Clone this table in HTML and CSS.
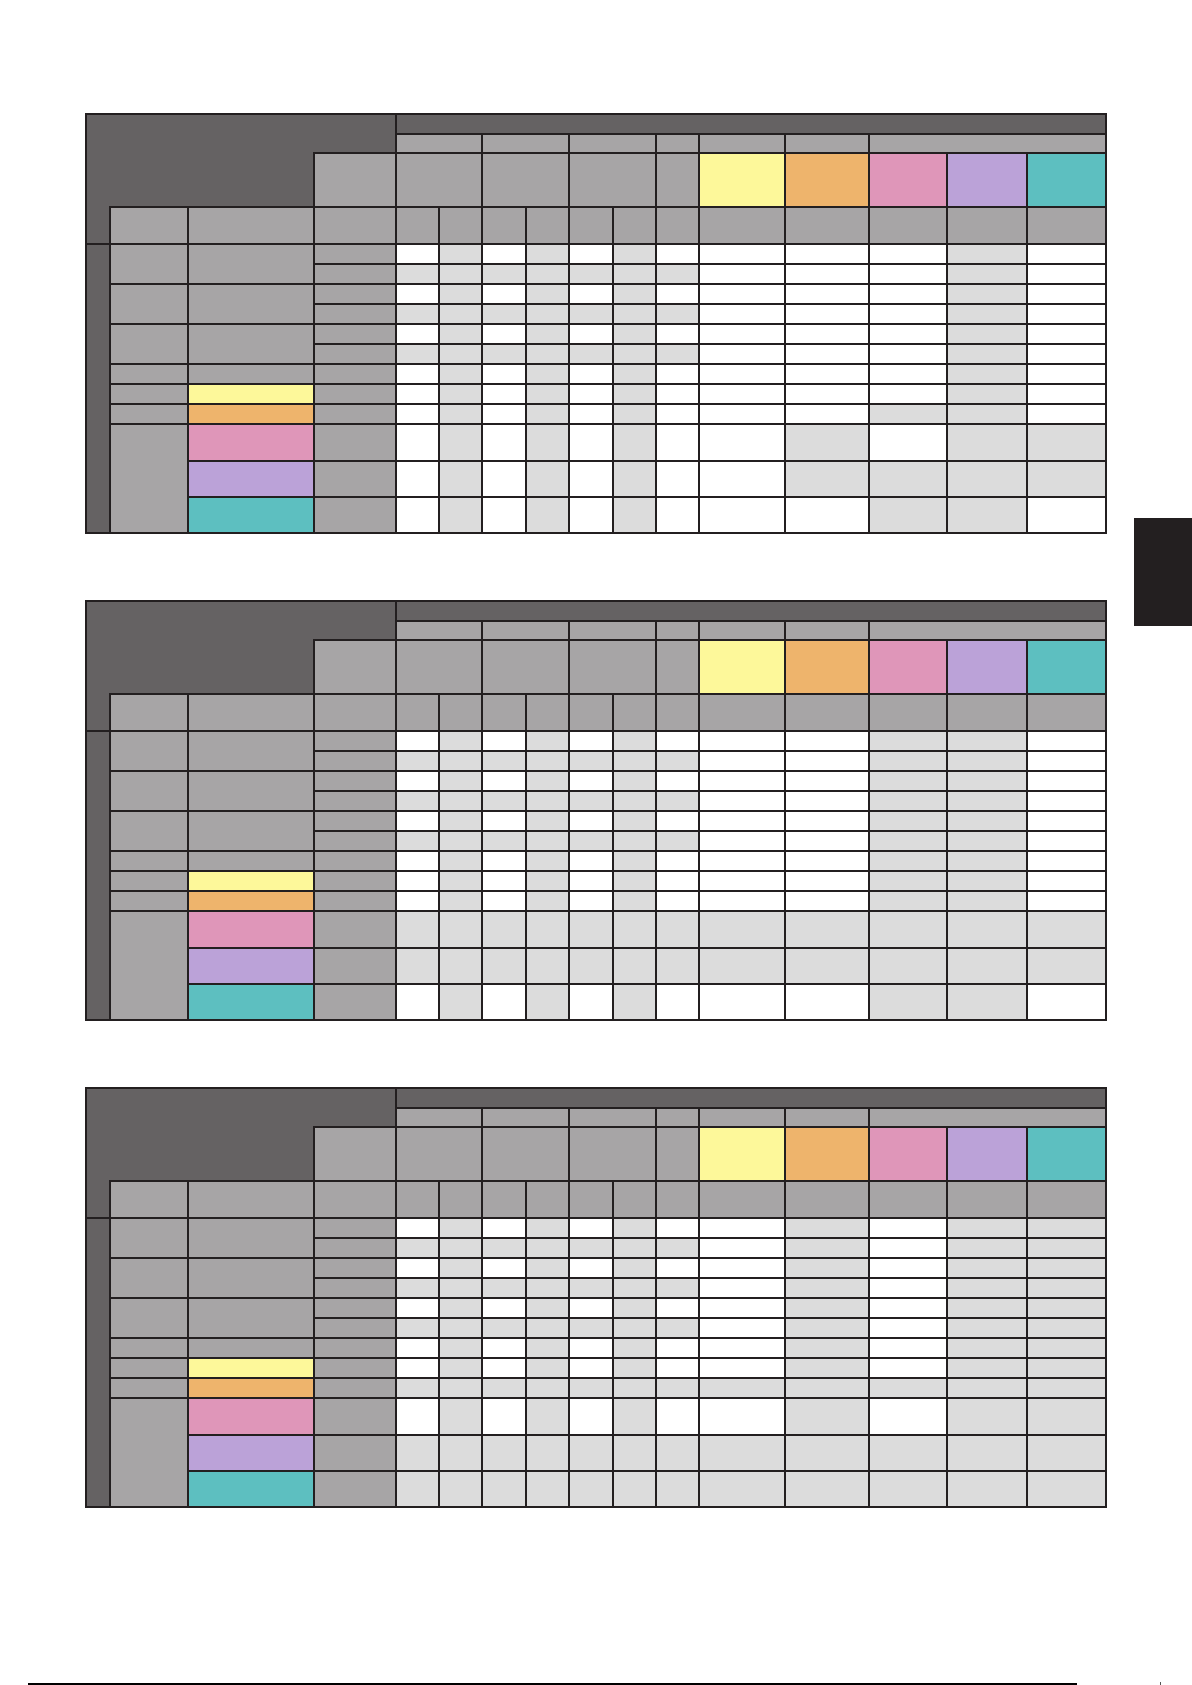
FILE: index.html
```html
<!DOCTYPE html>
<html>
<head>
<meta charset="utf-8">
<link rel="stylesheet" href="styles.css">
</head>
<body>
<div class="page">
  <div class="tables">

    <div class="grid">
      <i class="dk dk1"></i><i class="dk top"></i>
      <i class="g h2 s1"></i><i class="g h2 s2"></i><i class="g h2 s3"></i><i class="g h2 s4"></i><i class="g h2 s5"></i><i class="g h2 s6"></i><i class="g h2 s7"></i>
      <i class="dk dk2"></i><i class="g h3 c4"></i><i class="g h3 s1"></i><i class="g h3 s2"></i><i class="g h3 s3"></i><i class="g h3 s4"></i><i class="y h3 s5"></i><i class="o h3 s6"></i><i class="p h3 c14"></i><i class="v h3 c15"></i><i class="t h3 c16"></i>
      <i class="dk dk3"></i>
      <i class="dk body"></i>
      <i class="g a1"></i><i class="g a2"></i><i class="g a3"></i><i class="g a4"></i><i class="g a5"></i><i class="g a6"></i><i class="g a7"></i>
      <i class="g b1"></i><i class="g b2"></i><i class="g b3"></i><i class="g b4"></i><i class="y b5"></i><i class="o b6"></i><i class="p b7"></i><i class="v b8"></i><i class="t b9"></i>
      <i class="g"></i><i class="g"></i><i class="g"></i><i class="g"></i><i class="g"></i><i class="g"></i><i class="g"></i><i class="g"></i><i class="g"></i><i class="g"></i><i class="g"></i><i class="g"></i><i class="g"></i><i class="g"></i><i class="g"></i>
      <i class="g"></i><i class="w"></i><i class="l"></i><i class="w"></i><i class="l"></i><i class="w"></i><i class="l"></i><i class="w"></i><i class="w"></i><i class="w"></i><i class="w"></i><i class="l"></i><i class="w"></i>
      <i class="g"></i><i class="l"></i><i class="l"></i><i class="l"></i><i class="l"></i><i class="l"></i><i class="l"></i><i class="l"></i><i class="w"></i><i class="w"></i><i class="w"></i><i class="l"></i><i class="w"></i>
      <i class="g"></i><i class="w"></i><i class="l"></i><i class="w"></i><i class="l"></i><i class="w"></i><i class="l"></i><i class="w"></i><i class="w"></i><i class="w"></i><i class="w"></i><i class="l"></i><i class="w"></i>
      <i class="g"></i><i class="l"></i><i class="l"></i><i class="l"></i><i class="l"></i><i class="l"></i><i class="l"></i><i class="l"></i><i class="w"></i><i class="w"></i><i class="w"></i><i class="l"></i><i class="w"></i>
      <i class="g"></i><i class="w"></i><i class="l"></i><i class="w"></i><i class="l"></i><i class="w"></i><i class="l"></i><i class="w"></i><i class="w"></i><i class="w"></i><i class="w"></i><i class="l"></i><i class="w"></i>
      <i class="g"></i><i class="l"></i><i class="l"></i><i class="l"></i><i class="l"></i><i class="l"></i><i class="l"></i><i class="l"></i><i class="w"></i><i class="w"></i><i class="w"></i><i class="l"></i><i class="w"></i>
      <i class="g"></i><i class="w"></i><i class="l"></i><i class="w"></i><i class="l"></i><i class="w"></i><i class="l"></i><i class="w"></i><i class="w"></i><i class="w"></i><i class="w"></i><i class="l"></i><i class="w"></i>
      <i class="g"></i><i class="w"></i><i class="l"></i><i class="w"></i><i class="l"></i><i class="w"></i><i class="l"></i><i class="w"></i><i class="w"></i><i class="w"></i><i class="w"></i><i class="l"></i><i class="w"></i>
      <i class="g"></i><i class="w"></i><i class="l"></i><i class="w"></i><i class="l"></i><i class="w"></i><i class="l"></i><i class="w"></i><i class="w"></i><i class="w"></i><i class="l"></i><i class="l"></i><i class="w"></i>
      <i class="g"></i><i class="w"></i><i class="l"></i><i class="w"></i><i class="l"></i><i class="w"></i><i class="l"></i><i class="w"></i><i class="w"></i><i class="l"></i><i class="w"></i><i class="l"></i><i class="l"></i>
      <i class="g"></i><i class="w"></i><i class="l"></i><i class="w"></i><i class="l"></i><i class="w"></i><i class="l"></i><i class="w"></i><i class="w"></i><i class="l"></i><i class="l"></i><i class="l"></i><i class="l"></i>
      <i class="g"></i><i class="w"></i><i class="l"></i><i class="w"></i><i class="l"></i><i class="w"></i><i class="l"></i><i class="w"></i><i class="w"></i><i class="w"></i><i class="l"></i><i class="l"></i><i class="w"></i>
    </div>

    <div class="grid">
      <i class="dk dk1"></i><i class="dk top"></i>
      <i class="g h2 s1"></i><i class="g h2 s2"></i><i class="g h2 s3"></i><i class="g h2 s4"></i><i class="g h2 s5"></i><i class="g h2 s6"></i><i class="g h2 s7"></i>
      <i class="dk dk2"></i><i class="g h3 c4"></i><i class="g h3 s1"></i><i class="g h3 s2"></i><i class="g h3 s3"></i><i class="g h3 s4"></i><i class="y h3 s5"></i><i class="o h3 s6"></i><i class="p h3 c14"></i><i class="v h3 c15"></i><i class="t h3 c16"></i>
      <i class="dk dk3"></i>
      <i class="dk body"></i>
      <i class="g a1"></i><i class="g a2"></i><i class="g a3"></i><i class="g a4"></i><i class="g a5"></i><i class="g a6"></i><i class="g a7"></i>
      <i class="g b1"></i><i class="g b2"></i><i class="g b3"></i><i class="g b4"></i><i class="y b5"></i><i class="o b6"></i><i class="p b7"></i><i class="v b8"></i><i class="t b9"></i>
      <i class="g"></i><i class="g"></i><i class="g"></i><i class="g"></i><i class="g"></i><i class="g"></i><i class="g"></i><i class="g"></i><i class="g"></i><i class="g"></i><i class="g"></i><i class="g"></i><i class="g"></i><i class="g"></i><i class="g"></i>
      <i class="g"></i><i class="w"></i><i class="l"></i><i class="w"></i><i class="l"></i><i class="w"></i><i class="l"></i><i class="w"></i><i class="w"></i><i class="w"></i><i class="l"></i><i class="l"></i><i class="w"></i>
      <i class="g"></i><i class="l"></i><i class="l"></i><i class="l"></i><i class="l"></i><i class="l"></i><i class="l"></i><i class="l"></i><i class="w"></i><i class="w"></i><i class="l"></i><i class="l"></i><i class="w"></i>
      <i class="g"></i><i class="w"></i><i class="l"></i><i class="w"></i><i class="l"></i><i class="w"></i><i class="l"></i><i class="w"></i><i class="w"></i><i class="w"></i><i class="l"></i><i class="l"></i><i class="w"></i>
      <i class="g"></i><i class="l"></i><i class="l"></i><i class="l"></i><i class="l"></i><i class="l"></i><i class="l"></i><i class="l"></i><i class="w"></i><i class="w"></i><i class="l"></i><i class="l"></i><i class="w"></i>
      <i class="g"></i><i class="w"></i><i class="l"></i><i class="w"></i><i class="l"></i><i class="w"></i><i class="l"></i><i class="w"></i><i class="w"></i><i class="w"></i><i class="l"></i><i class="l"></i><i class="w"></i>
      <i class="g"></i><i class="l"></i><i class="l"></i><i class="l"></i><i class="l"></i><i class="l"></i><i class="l"></i><i class="l"></i><i class="w"></i><i class="w"></i><i class="l"></i><i class="l"></i><i class="w"></i>
      <i class="g"></i><i class="w"></i><i class="l"></i><i class="w"></i><i class="l"></i><i class="w"></i><i class="l"></i><i class="w"></i><i class="w"></i><i class="w"></i><i class="l"></i><i class="l"></i><i class="w"></i>
      <i class="g"></i><i class="w"></i><i class="l"></i><i class="w"></i><i class="l"></i><i class="w"></i><i class="l"></i><i class="w"></i><i class="w"></i><i class="w"></i><i class="l"></i><i class="l"></i><i class="w"></i>
      <i class="g"></i><i class="w"></i><i class="l"></i><i class="w"></i><i class="l"></i><i class="w"></i><i class="l"></i><i class="w"></i><i class="w"></i><i class="w"></i><i class="l"></i><i class="l"></i><i class="w"></i>
      <i class="g"></i><i class="l"></i><i class="l"></i><i class="l"></i><i class="l"></i><i class="l"></i><i class="l"></i><i class="l"></i><i class="l"></i><i class="l"></i><i class="l"></i><i class="l"></i><i class="l"></i>
      <i class="g"></i><i class="l"></i><i class="l"></i><i class="l"></i><i class="l"></i><i class="l"></i><i class="l"></i><i class="l"></i><i class="l"></i><i class="l"></i><i class="l"></i><i class="l"></i><i class="l"></i>
      <i class="g"></i><i class="w"></i><i class="l"></i><i class="w"></i><i class="l"></i><i class="w"></i><i class="l"></i><i class="w"></i><i class="w"></i><i class="w"></i><i class="l"></i><i class="l"></i><i class="w"></i>
    </div>

    <div class="grid">
      <i class="dk dk1"></i><i class="dk top"></i>
      <i class="g h2 s1"></i><i class="g h2 s2"></i><i class="g h2 s3"></i><i class="g h2 s4"></i><i class="g h2 s5"></i><i class="g h2 s6"></i><i class="g h2 s7"></i>
      <i class="dk dk2"></i><i class="g h3 c4"></i><i class="g h3 s1"></i><i class="g h3 s2"></i><i class="g h3 s3"></i><i class="g h3 s4"></i><i class="y h3 s5"></i><i class="o h3 s6"></i><i class="p h3 c14"></i><i class="v h3 c15"></i><i class="t h3 c16"></i>
      <i class="dk dk3"></i>
      <i class="dk body"></i>
      <i class="g a1"></i><i class="g a2"></i><i class="g a3"></i><i class="g a4"></i><i class="g a5"></i><i class="g a6"></i><i class="g a7"></i>
      <i class="g b1"></i><i class="g b2"></i><i class="g b3"></i><i class="g b4"></i><i class="y b5"></i><i class="o b6"></i><i class="p b7"></i><i class="v b8"></i><i class="t b9"></i>
      <i class="g"></i><i class="g"></i><i class="g"></i><i class="g"></i><i class="g"></i><i class="g"></i><i class="g"></i><i class="g"></i><i class="g"></i><i class="g"></i><i class="g"></i><i class="g"></i><i class="g"></i><i class="g"></i><i class="g"></i>
      <i class="g"></i><i class="w"></i><i class="l"></i><i class="w"></i><i class="l"></i><i class="w"></i><i class="l"></i><i class="w"></i><i class="w"></i><i class="l"></i><i class="w"></i><i class="l"></i><i class="l"></i>
      <i class="g"></i><i class="l"></i><i class="l"></i><i class="l"></i><i class="l"></i><i class="l"></i><i class="l"></i><i class="l"></i><i class="w"></i><i class="l"></i><i class="w"></i><i class="l"></i><i class="l"></i>
      <i class="g"></i><i class="w"></i><i class="l"></i><i class="w"></i><i class="l"></i><i class="w"></i><i class="l"></i><i class="w"></i><i class="w"></i><i class="l"></i><i class="w"></i><i class="l"></i><i class="l"></i>
      <i class="g"></i><i class="l"></i><i class="l"></i><i class="l"></i><i class="l"></i><i class="l"></i><i class="l"></i><i class="l"></i><i class="w"></i><i class="l"></i><i class="w"></i><i class="l"></i><i class="l"></i>
      <i class="g"></i><i class="w"></i><i class="l"></i><i class="w"></i><i class="l"></i><i class="w"></i><i class="l"></i><i class="w"></i><i class="w"></i><i class="l"></i><i class="w"></i><i class="l"></i><i class="l"></i>
      <i class="g"></i><i class="l"></i><i class="l"></i><i class="l"></i><i class="l"></i><i class="l"></i><i class="l"></i><i class="l"></i><i class="w"></i><i class="l"></i><i class="w"></i><i class="l"></i><i class="l"></i>
      <i class="g"></i><i class="w"></i><i class="l"></i><i class="w"></i><i class="l"></i><i class="w"></i><i class="l"></i><i class="w"></i><i class="w"></i><i class="l"></i><i class="w"></i><i class="l"></i><i class="l"></i>
      <i class="g"></i><i class="w"></i><i class="l"></i><i class="w"></i><i class="l"></i><i class="w"></i><i class="l"></i><i class="w"></i><i class="w"></i><i class="l"></i><i class="w"></i><i class="l"></i><i class="l"></i>
      <i class="g"></i><i class="l"></i><i class="l"></i><i class="l"></i><i class="l"></i><i class="l"></i><i class="l"></i><i class="l"></i><i class="l"></i><i class="l"></i><i class="l"></i><i class="l"></i><i class="l"></i>
      <i class="g"></i><i class="w"></i><i class="l"></i><i class="w"></i><i class="l"></i><i class="w"></i><i class="l"></i><i class="w"></i><i class="w"></i><i class="l"></i><i class="w"></i><i class="l"></i><i class="l"></i>
      <i class="g"></i><i class="l"></i><i class="l"></i><i class="l"></i><i class="l"></i><i class="l"></i><i class="l"></i><i class="l"></i><i class="l"></i><i class="l"></i><i class="l"></i><i class="l"></i><i class="l"></i>
      <i class="g"></i><i class="l"></i><i class="l"></i><i class="l"></i><i class="l"></i><i class="l"></i><i class="l"></i><i class="l"></i><i class="l"></i><i class="l"></i><i class="l"></i><i class="l"></i><i class="l"></i>
    </div>

  </div>
  <div class="tab"></div>
</div>
<div class="footer"><span class="rule"></span><span class="mark"></span></div>
</body>
</html>
```

FILE: styles.css
```css
html, body {
  margin: 0;
  padding: 0;
  background: #ffffff;
}
body {
  width: 1192px;
  height: 1685px;
  overflow: hidden;
  font-family: "Liberation Sans", Arial, sans-serif;
}
.page {
  display: flex;
  align-items: flex-start;
  padding: 113px 0 0 85px;
}
.tables {
  display: flex;
  flex-direction: column;
  gap: 66px;
}
.tab {
  margin-left: auto;
  margin-top: 405px;
  width: 58px;
  height: 108px;
  background: #231f20;
}
.grid {
  display: grid;
  grid-template-columns: 22px 76px 124px 80px 41px 41px 42px 41px 42px 41px 41px 84px 82px 76px 78px 77px;
  grid-template-rows: 18px 17px 52px 35px repeat(9, 18px) 35px 34px 34px;
  gap: 2px;
  padding: 2px;
  background: #231f20;
  width: max-content;
}
.grid i { display: block; }
.dk { background: #656263; }
.g { background: #a7a5a6; }
.w { background: #ffffff; }
.l { background: #dcdcdc; }
.y { background: #fdf89a; }
.o { background: #eeb46c; }
.p { background: #df96b9; }
.v { background: #bba2d8; }
.t { background: #5dbfc0; }

.dk1 { grid-column: 1 / 5; grid-row: 1 / 3; }
.top { grid-column: 5 / 17; grid-row: 1; }
.dk2 { grid-column: 1 / 4; grid-row: 3; margin-top: -2px; }
.dk3 { grid-column: 1; grid-row: 4; margin-top: -2px; }
.body { grid-column: 1; grid-row: 5 / 17; }

.h2 { grid-row: 2; }
.h3 { grid-row: 3; }
.s1 { grid-column: 5 / 7; }
.s2 { grid-column: 7 / 9; }
.s3 { grid-column: 9 / 11; }
.s4 { grid-column: 11; }
.s5 { grid-column: 12; }
.s6 { grid-column: 13; }
.s7 { grid-column: 14 / 17; }
.c4 { grid-column: 4; }
.c14 { grid-column: 14; }
.c15 { grid-column: 15; }
.c16 { grid-column: 16; }

.a1 { grid-column: 2; grid-row: 5 / 7; }
.a2 { grid-column: 2; grid-row: 7 / 9; }
.a3 { grid-column: 2; grid-row: 9 / 11; }
.a4 { grid-column: 2; grid-row: 11; }
.a5 { grid-column: 2; grid-row: 12; }
.a6 { grid-column: 2; grid-row: 13; }
.a7 { grid-column: 2; grid-row: 14 / 17; }

.b1 { grid-column: 3; grid-row: 5 / 7; }
.b2 { grid-column: 3; grid-row: 7 / 9; }
.b3 { grid-column: 3; grid-row: 9 / 11; }
.b4 { grid-column: 3; grid-row: 11; }
.b5 { grid-column: 3; grid-row: 12; }
.b6 { grid-column: 3; grid-row: 13; }
.b7 { grid-column: 3; grid-row: 14; }
.b8 { grid-column: 3; grid-row: 15; }
.b9 { grid-column: 3; grid-row: 16; }

.footer {
  display: flex;
  align-items: flex-end;
  margin-top: 173px;
  padding-left: 28px;
  height: 4px;
}
.footer .rule {
  display: block;
  width: 1049px;
  height: 2px;
  background: #000000;
}
.footer .mark {
  display: block;
  margin-left: 83px;
  width: 1px;
  height: 3px;
  background: #555555;
}
```
